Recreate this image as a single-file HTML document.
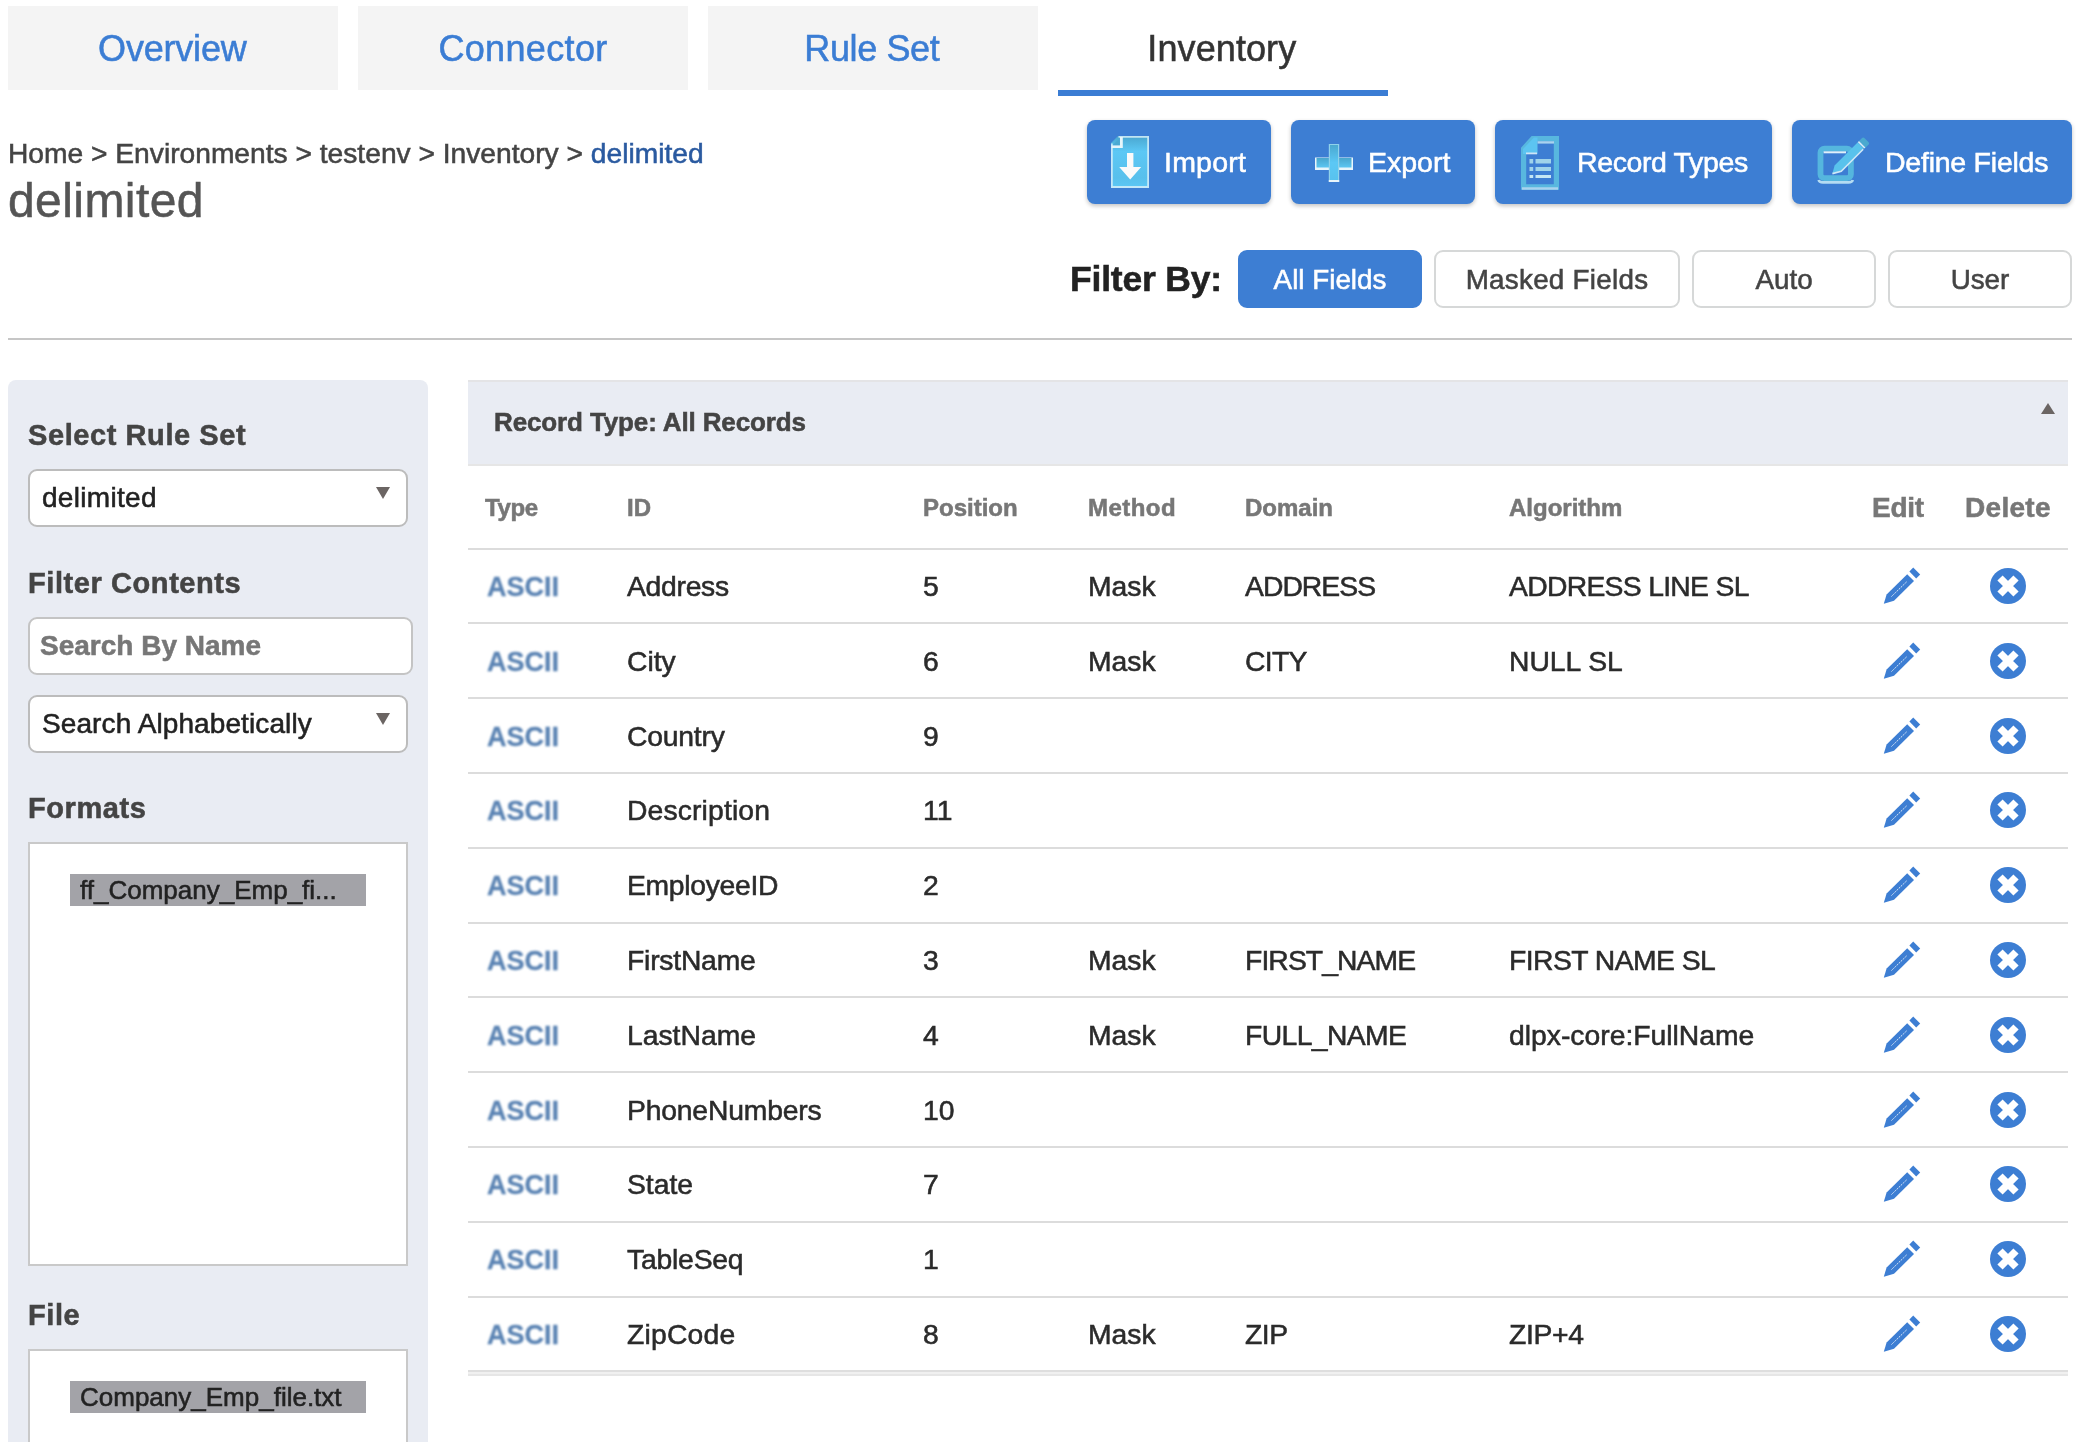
<!DOCTYPE html>
<html lang="en">
<head>
<meta charset="utf-8">
<title>Inventory - delimited</title>
<style>
*{box-sizing:border-box;margin:0;padding:0}
html,body{width:2090px;height:1442px;overflow:hidden;background:#fff}
body{font-family:"Liberation Sans",Arial,Helvetica,sans-serif;color:#333;position:relative;-webkit-text-stroke:.55px}
#pg{position:absolute;left:0;top:0;width:2090px;height:1442px;overflow:hidden;will-change:transform}
/* tabs */
.tab{position:absolute;top:6px;height:84px;width:330px;background:#f4f4f4;color:#3b7dd4;font-size:36px;line-height:86px;text-align:center;letter-spacing:-.2px}
.tab.active{background:#fff;color:#333;border-bottom:6px solid #3b7dd4;height:90px}
/* breadcrumb */
.crumb{position:absolute;left:8px;top:136px;font-size:28.2px;line-height:34px;color:#444;white-space:nowrap}
.crumb b{font-weight:normal;color:#2a5aa0}
.title{position:absolute;left:8px;top:173px;font-size:48px;line-height:56px;color:#555;white-space:nowrap;letter-spacing:.42px}
/* action buttons */
.btn{position:absolute;top:120px;height:84px;background:#3d7ed3;border-radius:8px;color:#fff;font-size:28.5px;line-height:84px;box-shadow:0 2px 4px rgba(0,0,0,.24);white-space:nowrap}
.btn span{position:absolute;top:0}
.btn svg{position:absolute}
/* filter */
.fby{position:absolute;left:1070px;top:256px;font-size:35.5px;letter-spacing:-.2px;line-height:46px;font-weight:bold;color:#222;white-space:nowrap}
.fb{position:absolute;top:250px;height:58px;border:2px solid #d6d8d8;border-radius:9px;background:#fff;color:#444;font-size:27.8px;line-height:55px;text-align:center;white-space:nowrap}
.fb.on{background:#3d7ed3;border-color:#3d7ed3;color:#fff}
.hr{position:absolute;left:8px;top:338px;width:2064px;height:2px;background:#c6c6c6}
/* sidebar */
.side{position:absolute;left:8px;top:380px;width:420px;height:1080px;background:#e9ecf3;border-radius:8px}
.sh{position:absolute;left:20px;font-size:29px;line-height:36px;font-weight:bold;color:#444;white-space:nowrap;letter-spacing:.58px;margin-top:1px}
.sel{position:absolute;left:20px;width:380px;height:58px;background:#fff;border:2px solid #bcbcbc;border-radius:9px;font-size:28px;line-height:54px;padding-left:12px;color:#222;white-space:nowrap}
.sel i{position:absolute;right:16px;top:16px;width:0;height:0;border-left:7px solid transparent;border-right:7px solid transparent;border-top:12px solid #6b6563}
.inp{position:absolute;left:20px;width:385px;height:58px;background:#fff;border:2px solid #c4c4c4;border-radius:9px;font-size:28px;line-height:54px;padding-left:10px;color:#777;font-weight:bold;white-space:nowrap}
.box{position:absolute;left:20px;width:380px;background:#fff;border:2px solid #c9c9c9}
.item{position:absolute;left:40px;top:30px;width:296px;height:32px;background:#a3a3a8;color:#222;font-size:26px;line-height:32px;padding-left:10px;white-space:nowrap}
/* table */
.phead{position:absolute;left:468px;top:380px;width:1600px;height:86px;background:#e9ecf3;border-top:2px solid #e4e4e6;border-bottom:2px solid #e6e6e6}
.phead span{position:absolute;left:26px;top:24px;font-size:26px;letter-spacing:-.13px;line-height:32px;font-weight:bold;color:#444;white-space:nowrap}
.phead i{position:absolute;right:13px;top:21px;width:0;height:0;border-left:7px solid transparent;border-right:7px solid transparent;border-bottom:11px solid #6b6563}
.th{position:absolute;top:491px;font-size:24px;line-height:34px;font-weight:bold;color:#777;white-space:nowrap}
.th.big{font-size:28px}
.line{position:absolute;left:468px;width:1600px;height:2px;background:#dcdcdc}
.row{position:absolute;left:468px;width:1600px;height:75px}
.row span{position:absolute;top:20.5px;font-size:28.3px;line-height:34px;color:#2b2b2b;white-space:nowrap}
.row .t{left:19px;font-weight:bold;color:#5a83b3;font-size:27px;top:22px;filter:blur(.9px);-webkit-text-stroke:.3px}
.row .c1{left:159px}.row .c2{left:455px}.row .c3{left:620px}.row .c4{left:777px}.row .c5{left:1041px}
.row svg{position:absolute}
</style>
</head>
<body>
<div id="pg">
<div class="tab" style="left:8px;text-indent:-1.4px">Overview</div>
<div class="tab" style="left:358px;letter-spacing:.35px">Connector</div>
<div class="tab" style="left:708px;letter-spacing:-.4px;text-indent:-2.4px">Rule Set</div>
<div class="tab active" style="left:1058px;letter-spacing:.1px;text-indent:-2.4px">Inventory</div>

<div class="crumb">Home &gt; Environments &gt; testenv &gt; Inventory &gt; <b>delimited</b></div>
<div class="title">delimited</div>

<div class="btn" style="left:1087px;width:184px"><svg style="left:24px;top:16px;filter:blur(.35px)" width="38" height="52" viewBox="0 0 38 52"><defs><linearGradient id="gi" x1="0" y1="0" x2="0" y2="1"><stop offset="0" stop-color="#4aa6cf"/><stop offset=".3" stop-color="#5cc8f5"/><stop offset=".8" stop-color="#58c0ec"/><stop offset="1" stop-color="#5cc8f5"/></linearGradient></defs><path d="M7 0 H38 V52 H0 V7 Z" fill="url(#gi)"/><path d="M7.5 .9 H37.1 V51 H.9 V7.5" fill="none" stroke="#d6eef8" stroke-width="1.8" opacity=".85"/><path d="M0.5 10.6 H10.4 V1" fill="none" stroke="#e6f5fb" stroke-width="2.8"/><path d="M1.5 9.2 L8.8 2 V9.2 Z" fill="#4ba9d2"/><path d="M16 17 H22.4 V31 H30.2 L19.2 43.6 L8.2 31 H16 Z" fill="#fafafa"/></svg><span style="left:77px;letter-spacing:.23px">Import</span></div>
<div class="btn" style="left:1291px;width:184px"><svg style="left:24px;top:24px;filter:blur(.35px)" width="38" height="38" viewBox="0 0 38 38"><defs><linearGradient id="ge" x1="0" y1="0" x2="0" y2="1"><stop offset="0" stop-color="#4aa8d0"/><stop offset=".5" stop-color="#5cc8f5"/><stop offset="1" stop-color="#58c2ee"/></linearGradient><linearGradient id="ge2" x1="0" y1="0" x2="0" y2="1"><stop offset="0" stop-color="#49a6cd"/><stop offset="1" stop-color="#5cc6f2"/></linearGradient></defs><rect x="0" y="13.5" width="38" height="12.5" fill="#e8f5fb"/><rect x="1.5" y="14" width="35" height="9.5" fill="url(#ge2)"/><rect x="13.8" y="0" width="10.4" height="38" fill="#8fd2ea"/><rect x="15" y="1" width="8" height="35.5" fill="url(#ge)"/><rect x="13.8" y="36" width="10.4" height="2" fill="#e8f5fb"/></svg><span style="left:77px;letter-spacing:0">Export</span></div>
<div class="btn" style="left:1495px;width:277px"><svg style="left:26px;top:16px;filter:blur(.45px)" width="38" height="54" viewBox="0 0 38 54"><path d="M12 2.5 H35.5 V51 H2.5 V13 Z" fill="none" stroke="#58b7df" stroke-width="5.4"/><path d="M2 13 L13 1.5 H16.5 V18 H2 Z" fill="#5cc4f1"/><path d="M16.5 6.4 H33" stroke="#a9d3ee" stroke-width="2.4" fill="none"/><path d="M5 17.4 H16" stroke="#cfe4f6" stroke-width="1.8" fill="none"/><path d="M1 52.5 H37" stroke="#a9d3ee" stroke-width="2.6" fill="none"/><g stroke="#9fd3ea" fill="none"><path d="M8.5 25.2 H12.2 M14.5 25.2 H30" stroke-width="4.6"/><path d="M8.5 33 H12.2 M14.5 33 H30" stroke-width="4.2"/><path d="M8.5 40.6 H12.2 M14.5 40.6 H30" stroke-width="3" stroke="#c4e6f4"/></g></svg><span style="left:82px;letter-spacing:-.38px">Record Types</span></div>
<div class="btn" style="left:1792px;width:280px"><svg style="left:24px;top:16px;filter:blur(.45px)" width="54" height="52" viewBox="0 0 54 52"><rect x="4.5" y="12.6" width="30.4" height="29.6" rx="4" fill="none" stroke="#55b6de" stroke-width="5.8"/><path d="M7.6 16.3 H30" stroke="#e0f0fa" stroke-width="2" fill="none"/><path d="M2.6 44 Q3.2 46.4 7 46.4 H32.5 Q36.2 46.4 36.8 44" stroke="#b4dcf2" stroke-width="2.6" fill="none"/><path d="M16.4 37.4 L18.6 29.4 L41.8 6.2 L47.8 12.4 L25.6 34.9 Z" fill="#59c2ec"/><path d="M43 5 L45.8 2.2 Q47.2 .8 48.6 2.2 L52.4 6 Q53.8 7.4 52.4 8.8 L49.4 11.8 Z" fill="#4aa9cf"/><path d="M42.4 5.6 L48.8 12" stroke="#d8eef8" stroke-width="1.6" fill="none"/><path d="M16.4 37.6 L25.2 35.4 L47.2 13.2" stroke="#d0e8f6" stroke-width="1.6" fill="none"/></svg><span style="left:93px;letter-spacing:-.24px">Define Fields</span></div>

<div class="fby">Filter By:</div>
<div class="fb on" style="left:1238px;width:184px">All Fields</div>
<div class="fb" style="left:1434px;width:246px;letter-spacing:.27px">Masked Fields</div>
<div class="fb" style="left:1692px;width:184px">Auto</div>
<div class="fb" style="left:1888px;width:184px">User</div>
<div class="hr"></div>

<div class="side">
  <div class="sh" style="top:36px">Select Rule Set</div>
  <div class="sel" style="top:89px;letter-spacing:.3px">delimited<i></i></div>
  <div class="sh" style="top:184px">Filter Contents</div>
  <div class="inp" style="top:237px">Search By Name</div>
  <div class="sel" style="top:315px;letter-spacing:.1px">Search Alphabetically<i></i></div>
  <div class="sh" style="top:409px">Formats</div>
  <div class="box" style="top:462px;height:424px"><div class="item">ff_Company_Emp_fi...</div></div>
  <div class="sh" style="top:916px">File</div>
  <div class="box" style="top:969px;height:200px"><div class="item">Company_Emp_file.txt</div></div>
</div>

<div class="phead"><span>Record Type: All Records</span><i></i></div>
<div class="th" style="left:485px;letter-spacing:-.4px">Type</div>
<div class="th" style="left:627px">ID</div>
<div class="th" style="left:923px">Position</div>
<div class="th" style="left:1088px;letter-spacing:.45px">Method</div>
<div class="th" style="left:1245px">Domain</div>
<div class="th" style="left:1509px">Algorithm</div>
<div class="th big" style="left:1872px;letter-spacing:-.3px">Edit</div>
<div class="th big" style="left:1965px;letter-spacing:.3px">Delete</div>
<div class="line" style="top:548px"></div>
<div class="row" style="top:548px"><span class="t">ASCII</span><span class="c1" style="letter-spacing:-0.28px">Address</span><span class="c2">5</span><span class="c3">Mask</span><span class="c4" style="letter-spacing:-0.96px">ADDRESS</span><span class="c5" style="letter-spacing:-0.69px">ADDRESS LINE SL</span><svg style="left:1415px;top:19px;filter:blur(.35px)" width="38" height="38" viewBox="0 0 38 38"><g fill="#3d7ed3"><path d="M0.8 36.8 L3.6 27.4 L24.2 7.3 L31 14.1 L11 33.8 Z"/><path d="M26.4 4.6 L30.2 0.6 L37.2 7.6 L33.2 11.6 Z"/></g><path d="M8.5 29.5 L24 14.5" stroke="#fff" stroke-width="1" stroke-dasharray="1.6 1" fill="none" opacity=".85"/></svg><svg style="left:1522px;top:20px;filter:blur(.35px)" width="36" height="36" viewBox="0 0 36 36"><circle cx="18" cy="18" r="18" fill="#3d7ed3"/><path d="M10 10 L26 26 M26 10 L10 26" stroke="#fff" stroke-width="7.4" fill="none"/></svg></div>
<div class="line" style="top:622px"></div>
<div class="row" style="top:623px"><span class="t">ASCII</span><span class="c1">City</span><span class="c2">6</span><span class="c3">Mask</span><span class="c4" style="letter-spacing:-0.7px">CITY</span><span class="c5">NULL SL</span><svg style="left:1415px;top:19px;filter:blur(.35px)" width="38" height="38" viewBox="0 0 38 38"><g fill="#3d7ed3"><path d="M0.8 36.8 L3.6 27.4 L24.2 7.3 L31 14.1 L11 33.8 Z"/><path d="M26.4 4.6 L30.2 0.6 L37.2 7.6 L33.2 11.6 Z"/></g><path d="M8.5 29.5 L24 14.5" stroke="#fff" stroke-width="1" stroke-dasharray="1.6 1" fill="none" opacity=".85"/></svg><svg style="left:1522px;top:20px;filter:blur(.35px)" width="36" height="36" viewBox="0 0 36 36"><circle cx="18" cy="18" r="18" fill="#3d7ed3"/><path d="M10 10 L26 26 M26 10 L10 26" stroke="#fff" stroke-width="7.4" fill="none"/></svg></div>
<div class="line" style="top:697px"></div>
<div class="row" style="top:698px"><span class="t">ASCII</span><span class="c1" style="letter-spacing:-0.2px">Country</span><span class="c2">9</span><svg style="left:1415px;top:19px;filter:blur(.35px)" width="38" height="38" viewBox="0 0 38 38"><g fill="#3d7ed3"><path d="M0.8 36.8 L3.6 27.4 L24.2 7.3 L31 14.1 L11 33.8 Z"/><path d="M26.4 4.6 L30.2 0.6 L37.2 7.6 L33.2 11.6 Z"/></g><path d="M8.5 29.5 L24 14.5" stroke="#fff" stroke-width="1" stroke-dasharray="1.6 1" fill="none" opacity=".85"/></svg><svg style="left:1522px;top:20px;filter:blur(.35px)" width="36" height="36" viewBox="0 0 36 36"><circle cx="18" cy="18" r="18" fill="#3d7ed3"/><path d="M10 10 L26 26 M26 10 L10 26" stroke="#fff" stroke-width="7.4" fill="none"/></svg></div>
<div class="line" style="top:772px"></div>
<div class="row" style="top:772px"><span class="t">ASCII</span><span class="c1" style="letter-spacing:0.14px">Description</span><span class="c2">11</span><svg style="left:1415px;top:19px;filter:blur(.35px)" width="38" height="38" viewBox="0 0 38 38"><g fill="#3d7ed3"><path d="M0.8 36.8 L3.6 27.4 L24.2 7.3 L31 14.1 L11 33.8 Z"/><path d="M26.4 4.6 L30.2 0.6 L37.2 7.6 L33.2 11.6 Z"/></g><path d="M8.5 29.5 L24 14.5" stroke="#fff" stroke-width="1" stroke-dasharray="1.6 1" fill="none" opacity=".85"/></svg><svg style="left:1522px;top:20px;filter:blur(.35px)" width="36" height="36" viewBox="0 0 36 36"><circle cx="18" cy="18" r="18" fill="#3d7ed3"/><path d="M10 10 L26 26 M26 10 L10 26" stroke="#fff" stroke-width="7.4" fill="none"/></svg></div>
<div class="line" style="top:847px"></div>
<div class="row" style="top:847px"><span class="t">ASCII</span><span class="c1" style="letter-spacing:-0.3px">EmployeeID</span><span class="c2">2</span><svg style="left:1415px;top:19px;filter:blur(.35px)" width="38" height="38" viewBox="0 0 38 38"><g fill="#3d7ed3"><path d="M0.8 36.8 L3.6 27.4 L24.2 7.3 L31 14.1 L11 33.8 Z"/><path d="M26.4 4.6 L30.2 0.6 L37.2 7.6 L33.2 11.6 Z"/></g><path d="M8.5 29.5 L24 14.5" stroke="#fff" stroke-width="1" stroke-dasharray="1.6 1" fill="none" opacity=".85"/></svg><svg style="left:1522px;top:20px;filter:blur(.35px)" width="36" height="36" viewBox="0 0 36 36"><circle cx="18" cy="18" r="18" fill="#3d7ed3"/><path d="M10 10 L26 26 M26 10 L10 26" stroke="#fff" stroke-width="7.4" fill="none"/></svg></div>
<div class="line" style="top:922px"></div>
<div class="row" style="top:922px"><span class="t">ASCII</span><span class="c1" style="letter-spacing:-0.22px">FirstName</span><span class="c2">3</span><span class="c3">Mask</span><span class="c4" style="letter-spacing:-0.9px">FIRST_NAME</span><span class="c5" style="letter-spacing:-0.54px">FIRST NAME SL</span><svg style="left:1415px;top:19px;filter:blur(.35px)" width="38" height="38" viewBox="0 0 38 38"><g fill="#3d7ed3"><path d="M0.8 36.8 L3.6 27.4 L24.2 7.3 L31 14.1 L11 33.8 Z"/><path d="M26.4 4.6 L30.2 0.6 L37.2 7.6 L33.2 11.6 Z"/></g><path d="M8.5 29.5 L24 14.5" stroke="#fff" stroke-width="1" stroke-dasharray="1.6 1" fill="none" opacity=".85"/></svg><svg style="left:1522px;top:20px;filter:blur(.35px)" width="36" height="36" viewBox="0 0 36 36"><circle cx="18" cy="18" r="18" fill="#3d7ed3"/><path d="M10 10 L26 26 M26 10 L10 26" stroke="#fff" stroke-width="7.4" fill="none"/></svg></div>
<div class="line" style="top:996px"></div>
<div class="row" style="top:997px"><span class="t">ASCII</span><span class="c1">LastName</span><span class="c2">4</span><span class="c3">Mask</span><span class="c4" style="letter-spacing:-0.6px">FULL_NAME</span><span class="c5">dlpx-core:FullName</span><svg style="left:1415px;top:19px;filter:blur(.35px)" width="38" height="38" viewBox="0 0 38 38"><g fill="#3d7ed3"><path d="M0.8 36.8 L3.6 27.4 L24.2 7.3 L31 14.1 L11 33.8 Z"/><path d="M26.4 4.6 L30.2 0.6 L37.2 7.6 L33.2 11.6 Z"/></g><path d="M8.5 29.5 L24 14.5" stroke="#fff" stroke-width="1" stroke-dasharray="1.6 1" fill="none" opacity=".85"/></svg><svg style="left:1522px;top:20px;filter:blur(.35px)" width="36" height="36" viewBox="0 0 36 36"><circle cx="18" cy="18" r="18" fill="#3d7ed3"/><path d="M10 10 L26 26 M26 10 L10 26" stroke="#fff" stroke-width="7.4" fill="none"/></svg></div>
<div class="line" style="top:1071px"></div>
<div class="row" style="top:1072px"><span class="t">ASCII</span><span class="c1" style="letter-spacing:-0.18px">PhoneNumbers</span><span class="c2">10</span><svg style="left:1415px;top:19px;filter:blur(.35px)" width="38" height="38" viewBox="0 0 38 38"><g fill="#3d7ed3"><path d="M0.8 36.8 L3.6 27.4 L24.2 7.3 L31 14.1 L11 33.8 Z"/><path d="M26.4 4.6 L30.2 0.6 L37.2 7.6 L33.2 11.6 Z"/></g><path d="M8.5 29.5 L24 14.5" stroke="#fff" stroke-width="1" stroke-dasharray="1.6 1" fill="none" opacity=".85"/></svg><svg style="left:1522px;top:20px;filter:blur(.35px)" width="36" height="36" viewBox="0 0 36 36"><circle cx="18" cy="18" r="18" fill="#3d7ed3"/><path d="M10 10 L26 26 M26 10 L10 26" stroke="#fff" stroke-width="7.4" fill="none"/></svg></div>
<div class="line" style="top:1146px"></div>
<div class="row" style="top:1146px"><span class="t">ASCII</span><span class="c1">State</span><span class="c2">7</span><svg style="left:1415px;top:19px;filter:blur(.35px)" width="38" height="38" viewBox="0 0 38 38"><g fill="#3d7ed3"><path d="M0.8 36.8 L3.6 27.4 L24.2 7.3 L31 14.1 L11 33.8 Z"/><path d="M26.4 4.6 L30.2 0.6 L37.2 7.6 L33.2 11.6 Z"/></g><path d="M8.5 29.5 L24 14.5" stroke="#fff" stroke-width="1" stroke-dasharray="1.6 1" fill="none" opacity=".85"/></svg><svg style="left:1522px;top:20px;filter:blur(.35px)" width="36" height="36" viewBox="0 0 36 36"><circle cx="18" cy="18" r="18" fill="#3d7ed3"/><path d="M10 10 L26 26 M26 10 L10 26" stroke="#fff" stroke-width="7.4" fill="none"/></svg></div>
<div class="line" style="top:1221px"></div>
<div class="row" style="top:1221px"><span class="t">ASCII</span><span class="c1" style="letter-spacing:-0.2px">TableSeq</span><span class="c2">1</span><svg style="left:1415px;top:19px;filter:blur(.35px)" width="38" height="38" viewBox="0 0 38 38"><g fill="#3d7ed3"><path d="M0.8 36.8 L3.6 27.4 L24.2 7.3 L31 14.1 L11 33.8 Z"/><path d="M26.4 4.6 L30.2 0.6 L37.2 7.6 L33.2 11.6 Z"/></g><path d="M8.5 29.5 L24 14.5" stroke="#fff" stroke-width="1" stroke-dasharray="1.6 1" fill="none" opacity=".85"/></svg><svg style="left:1522px;top:20px;filter:blur(.35px)" width="36" height="36" viewBox="0 0 36 36"><circle cx="18" cy="18" r="18" fill="#3d7ed3"/><path d="M10 10 L26 26 M26 10 L10 26" stroke="#fff" stroke-width="7.4" fill="none"/></svg></div>
<div class="line" style="top:1296px"></div>
<div class="row" style="top:1296px"><span class="t">ASCII</span><span class="c1" style="letter-spacing:0.2px">ZipCode</span><span class="c2">8</span><span class="c3">Mask</span><span class="c4" style="letter-spacing:-0.45px">ZIP</span><span class="c5" style="letter-spacing:-0.34px">ZIP+4</span><svg style="left:1415px;top:19px;filter:blur(.35px)" width="38" height="38" viewBox="0 0 38 38"><g fill="#3d7ed3"><path d="M0.8 36.8 L3.6 27.4 L24.2 7.3 L31 14.1 L11 33.8 Z"/><path d="M26.4 4.6 L30.2 0.6 L37.2 7.6 L33.2 11.6 Z"/></g><path d="M8.5 29.5 L24 14.5" stroke="#fff" stroke-width="1" stroke-dasharray="1.6 1" fill="none" opacity=".85"/></svg><svg style="left:1522px;top:20px;filter:blur(.35px)" width="36" height="36" viewBox="0 0 36 36"><circle cx="18" cy="18" r="18" fill="#3d7ed3"/><path d="M10 10 L26 26 M26 10 L10 26" stroke="#fff" stroke-width="7.4" fill="none"/></svg></div>
<div class="line" style="top:1370px;background:#dedede"></div><div class="line" style="top:1372px;background:#f0f0f0"></div><div class="line" style="top:1374px;background:#e6e6e6"></div>
</div>
</body>
</html>
